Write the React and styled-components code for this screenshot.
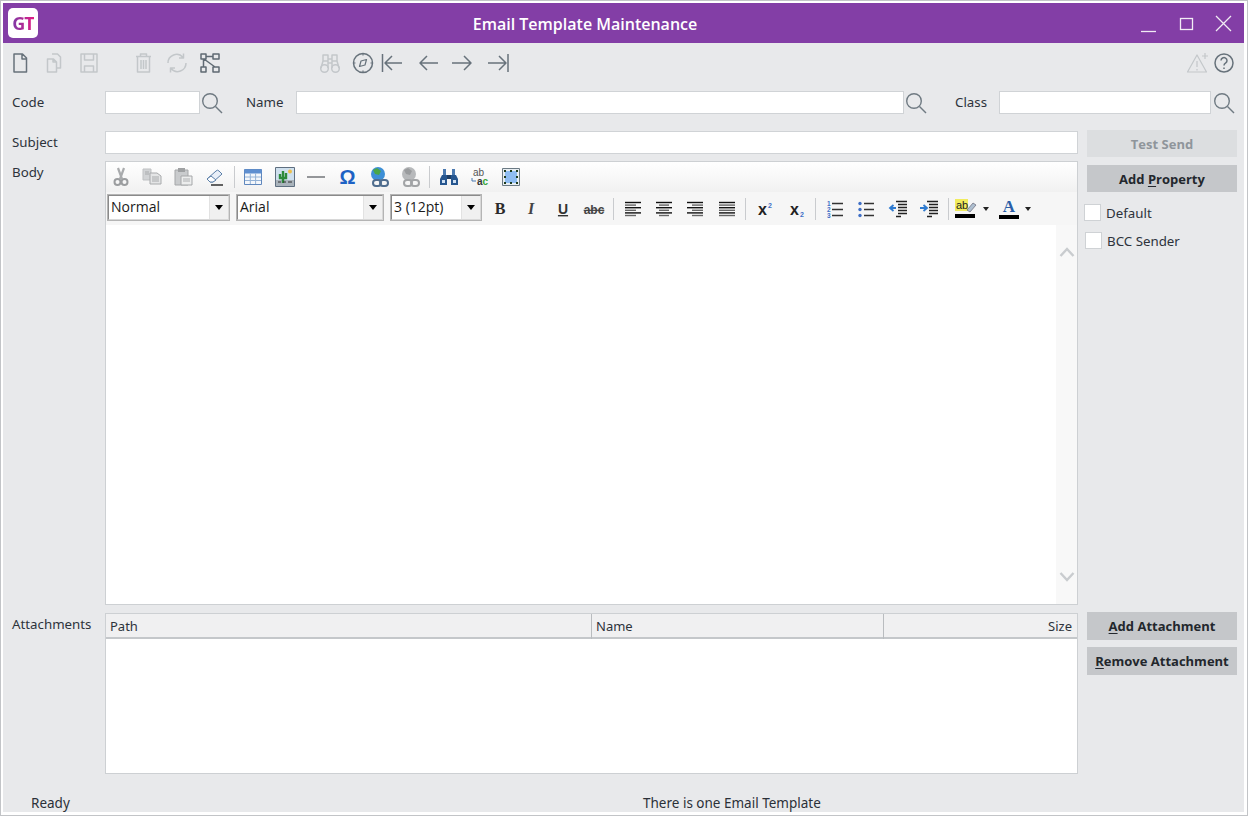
import React from "react";
import styled, { createGlobalStyle } from "styled-components";

const Global = createGlobalStyle`
  html, body { margin: 0; padding: 0; background: #fff; }
  * { box-sizing: border-box; }
  body { font-family: "Noto Sans", "Open Sans", sans-serif; font-size: 13.3px; color: #2b3038; }
`;

const Frame = styled.div`
  width: 1248px; height: 816px; border: 1px solid #c2c4c7; background: #fff; padding: 2px 3px 3px 2px;
`;
const Win = styled.div`
  height: 100%; background: #e8e9eb; display: flex; flex-direction: column; overflow: hidden;
`;
const TitleBar = styled.header`
  height: 40px; flex: none; background: #833ea6; display: flex; align-items: center; position: relative; padding-left: 5px;
`;
const Logo = styled.div`
  width: 30px; height: 30px; border-radius: 5px; background: #fff; display: flex; align-items: center; justify-content: center;
`;
const LogoText = styled.span`
  font: 700 18px "Open Sans", sans-serif; letter-spacing: -1px;
  background: linear-gradient(90deg, #7b3aa8, #e21c83); -webkit-background-clip: text; background-clip: text; color: transparent;
`;
const Title = styled.h1`
  flex: 1; margin: 0 0 0 -35px; padding: 1px 77px 0 0; text-align: center; color: #fff; font: 600 16px "Open Sans", sans-serif;
`;
const WinControls = styled.div`
  position: absolute; right: 0; top: 0; height: 40px; width: 120px;
`;
const WinSvg = styled.svg`
  position: absolute; left: 0; top: 0; width: 120px; height: 40px; fill: none; stroke: #f1ecf4; stroke-width: 1.3;
`;
const Toolbar = styled.div`
  height: 38px; flex: none; display: flex; align-items: center; padding-top: 1px;
`;
const ToolSlot = styled.span`
  width: 24px; height: 24px; flex: none; margin-left: ${p => p.$ml || 0}px; display: flex;
`;
const Spacer = styled.div` flex: 1; `;
const Ico = styled.svg`
  width: 24px; height: 24px; fill: none; stroke: ${p => p.$dark ? "#5f6a73" : p.$off ? "#c3c7ca" : "#67727b"}; stroke-width: 1.5; stroke-linejoin: round;
`;
const TopRow = styled.div`
  height: 23px; flex: none; display: flex; align-items: center; padding-left: 9px; margin-top: 10px;
`;
const Label = styled.label`
  display: block; width: ${p => p.$w ? p.$w + "px" : "auto"}; flex: none; white-space: nowrap; color: #2d333b;
  margin-left: ${p => p.$ml || 0}px; padding-bottom: ${p => p.$pb || 0}px;
`;
const Input = styled.div`
  height: 23px; width: ${p => p.$w ? p.$w + "px" : "100%"}; flex: none; background: #fff; border: 1px solid #d0d3d6;
`;
const SearchBtn = styled.svg`
  width: 24px; height: 24px; flex: none; fill: none; stroke: #6f7a82; stroke-width: 1.4; margin-left: ${p => p.$ml || 0}px;
`;
const FormGrid = styled.div`
  display: grid; grid-template-columns: 93px 973px 150px; column-gap: 0; padding-left: 9px; margin-top: 17px;
  grid-template-rows: 23px 445px 161px; row-gap: 7px;
`;
const RowLabel = styled(Label)`
  padding-top: ${p => p.$top || 0}px;
`;
const SideCol = styled.div`
  margin-left: 9px; display: flex; flex-direction: column; gap: 7px; position: relative;
`;
const SideBtn = styled.button`
  width: 150px; height: ${p => p.$h || 28}px; border: 0; padding: 0; flex: none; background: ${p => p.disabled ? "#dcdee0" : "#c5c7ca"};
  color: ${p => p.disabled ? "#8f959b" : "#23272d"}; font: 700 13px "Open Sans", "Noto Sans", sans-serif;
  margin-top: ${p => p.$mt || 0}px;
  u { text-underline-offset: 2px; }
`;
const CheckRow = styled.div`
  display: flex; align-items: center; gap: 5px; height: 17px; margin-left: ${p => p.$ml}px; margin-top: ${p => p.$mt}px;
`;
const Box = styled.span`
  width: 17px; height: 17px; background: #fff; border: 1px solid #cfd2d5; flex: none;
`;
const Editor = styled.div`
  border: 1px solid #cdd0d3; background: #fff; display: flex; flex-direction: column; height: 444px; width: 973px;
`;
const EdBar = styled.div`
  height: ${p => p.$h}px; flex: none; display: flex; align-items: center;
  background: ${p => p.$g ? "linear-gradient(#ffffff, #f1f1f1)" : "#f6f6f6"}; padding-left: ${p => p.$pl || 0}px;
`;
const EdSlot = styled.span`
  width: ${p => p.$w || 31.4}px; flex: none; height: 24px; display: flex; align-items: center; justify-content: center;
`;
const EdGap = styled.span` width: ${p => p.$w}px; flex: none; `;
const EdSep = styled.span`
  width: 7px; flex: none; display: flex; justify-content: center;
  &::before { content: ""; width: 1px; height: 22px; background: #c9cbce; }
`;
const EdIco = styled.svg` width: ${p => p.$w || 20}px; height: 20px; flex: none; overflow: visible; `;
const OmegaGlyph = styled.span`
  font: 700 20px/24px "Liberation Sans", Arial, sans-serif; color: #1d62c4;
`;
const FontColorGlyph = styled.span`
  display: block; width: 20px; height: 20px; text-align: center; overflow: visible;
  font: 700 17px/16px "Liberation Serif", serif; color: #2a5ea8; border-bottom: 4px solid #000;
`;
const Select = styled.div`
  width: ${p => p.$w}px; height: 27px; margin-left: ${p => p.$ml || 0}px; margin-top: -2px; flex: none; background: #fff; display: flex; align-items: stretch;
  border: 2px solid; border-color: #8a8a8a #d8d8d8 #d8d8d8 #8a8a8a; outline: 1px solid #b4b4b4; outline-offset: -1px;
  font: 14px "Open Sans", Arial, sans-serif; color: #1a1a1a;
`;
const SelectText = styled.span` flex: 1; padding: 1px 0 0 2px; line-height: 19px; `;
const SelectArrow = styled.span`
  width: 19px; background: #f0f0f0; border-left: 1px solid #e2e2e2; display: flex; align-items: center; justify-content: center;
  &::before { content: ""; border: 4px solid transparent; border-top: 5px solid #000; border-bottom: 0; }
`;
const Drop = styled.span`
  border: 3px solid transparent; border-top: 4px solid #222; border-bottom: 0; margin-left: ${p => p.$ml || 0}px; flex: none;
`;
const EdBody = styled.div` flex: 1; display: flex; justify-content: flex-end; background: #fff; `;
const ScrollBar = styled.div`
  width: 21px; background: #f8f8f8; display: flex; flex-direction: column; justify-content: space-between; align-items: center; padding: 21px 0;
`;
const Chev = styled.svg` width: 16px; height: 12px; fill: none; stroke: #c9cccf; stroke-width: 2.4; `;
const Table = styled.div`
  border: 1px solid #cdd0d3; background: #fff; width: 973px; height: 161px;
`;
const THead = styled.div`
  height: 25px; background: #f0f0f1; border-bottom: 2px solid #c4c7ca; display: grid; grid-template-columns: 485px 292px 1fr;
`;
const Th = styled.div`
  padding: 0 5px 0 4px; line-height: 25px; font-size: 13px; border-left: ${p => p.$first ? 0 : "1px solid #b9bcbf"}; text-align: ${p => p.$right ? "right" : "left"}; color: #2d333b;
`;
const Status = styled.footer`
  margin-top: auto; height: 22px; flex: none; position: relative; display: flex; align-items: center; padding-left: 28px; padding-top: 4px; font-size: 13.5px;
`;
const StatusMid = styled.span`
  position: absolute; left: 640px; top: 4px; white-space: nowrap;
`;
const EndGap = styled.span` width: 8px; flex: none; `;

const P = ({ off, dark, children }) => <Ico viewBox="0 0 24 24" $off={off} $dark={dark}>{children}</Ico>;
const Search = ({ ml }) => <SearchBtn viewBox="0 0 24 24" $ml={ml}><circle cx="10" cy="10" r="7.3" /><path d="M15.5 15.5 22 22" /></SearchBtn>;

const ScissorsI = () => <EdIco viewBox="0 0 20 20"><path d="M7 1l4 11M13 1 9 12" stroke="#a9abad" strokeWidth="2.2" fill="none" /><circle cx="6.500" cy="15" r="3" fill="none" stroke="#9b9d9f" strokeWidth="2" /><circle cx="13.500" cy="15" r="3" fill="none" stroke="#9b9d9f" strokeWidth="2" /></EdIco>;
const CopyI = () => <EdIco viewBox="0 0 20 20"><path d="M1 2h8v11H1z" fill="#d2d4d6" stroke="#bfc1c3" /><path d="M8 6h7l4 3v8H8z" fill="#e4e5e6" stroke="#a8aaac" /><path d="M3 5h4M3 7h4M10 10h7M10 12h7M10 14h7" stroke="#a8aaac" /></EdIco>;
const PasteI = () => <EdIco viewBox="0 0 20 20"><path d="M2 3h13v15H2z" fill="#c9cbcd" stroke="#a5a7a9" /><path d="M5 1h7v4H5z" fill="#9fa1a3" /><path d="M8 9h11v9H8z" fill="#eceded" stroke="#a5a7a9" /><path d="M10 12h7M10 14h7" stroke="#aeb0b2" /></EdIco>;
const EraserI = () => <EdIco viewBox="0 0 20 20"><path d="M2 12 11 4a2 2 0 0 1 3 0l3 3-9 8H5z" fill="#e9eff8" stroke="#5a7ea8" /><path d="M2 12l4-3 5 4-3 2H5z" fill="#fff" stroke="#5a7ea8" /><path d="M6 18h12" stroke="#222" strokeWidth="1.4" /></EdIco>;
const TableI = () => <EdIco viewBox="0 0 20 20"><path d="M1.500 2.500h17v15h-17z" fill="#f4f7fb" stroke="#5f87bd" /><path d="M1.500 2.500h17v4h-17z" fill="#5f8fd0" /><path d="M2 10h16M2 13.500h16M7.300 6.500V17M12.600 6.500V17" stroke="#94b2d6" /></EdIco>;
const ImageI = () => <EdIco viewBox="0 0 20 20"><path d="M.5.5h19v19H.5z" fill="#cfe0ee" stroke="#5f6f80" /><path d="M1 13h18v6H1z" fill="#a9b3bb" /><path d="M8 4v12M5 7v4h6V6" stroke="#2c8a3a" strokeWidth="2.400" fill="none" /><circle cx="15" cy="4.500" r="2" fill="#eec04a" /><path d="M3 15h3M8 15h3M13 15h4" stroke="#333" /></EdIco>;
const HrI = () => <EdIco viewBox="0 0 20 20"><path d="M1 10h18" stroke="#7b7e81" strokeWidth="1.600" /></EdIco>;
const LinkI = ({ gray }) => <EdIco viewBox="0 0 20 20" $w={22}><circle cx="9" cy="7" r="7" fill={gray ? "#b7b9bb" : "#3d8fd6"} /><path d="M4 3l4-2 4 3-2 4-4-1z" fill={gray ? "#9a9c9e" : "#49a648"} /><rect x="4" y="13" width="8" height="6" rx="3" fill="none" stroke={gray ? "#a2a4a6" : "#4f6d8e"} strokeWidth="2" /><rect x="11" y="13" width="8" height="6" rx="3" fill="none" stroke={gray ? "#a2a4a6" : "#4f6d8e"} strokeWidth="2" /></EdIco>;
const FindI = () => <EdIco viewBox="0 0 20 20"><path d="M3 8h5v10H1V12zM12 8h5l2 4v6h-7z" fill="#26568f" /><path d="M4 2h3v6H4zM13 2h3v6h-3z" fill="#4a79b0" /><path d="M8 8h4v4H8z" fill="#1f3f66" /><path d="M3 13h3v3H3zM14 13h3v3h-3z" fill="#cfe0f2" /></EdIco>;
const ReplaceI = () => <EdIco viewBox="0 0 20 20"><text x="3" y="9" fontFamily="Liberation Sans" fontSize="10" fill="#555">ab</text><text x="7" y="18" fontFamily="Liberation Sans" fontWeight="700" fontSize="10" fill="#333">a<tspan fill="#3aa53a">c</tspan></text><path d="M2 11v3h4" stroke="#4a79b0" fill="none" /></EdIco>;
const SelectAllI = () => <EdIco viewBox="0 0 20 20"><path d="M1.500 1.500h17v17h-17z" fill="#e8eef2" stroke="#6b7a84" /><path d="M4 4h12v12H4z" fill="#8fbdf2" /><path d="M3 3h2v2H3zM9 3h2v2H9zM15 3h2v2h-2zM3 9h2v2H3zM15 9h2v2h-2zM3 15h2v2H3zM9 15h2v2H9zM15 15h2v2h-2z" fill="#1d3b1d" /></EdIco>;

const Glyph = ({ t, bold, italic, under, strike, color = "#2a2a2a", size = 16, family = "Liberation Serif" }) => (
  <EdIco viewBox="0 0 20 20" $w={22}><text x="10" y="15" textAnchor="middle" fontFamily={family} fontSize={size} fontWeight={bold ? 700 : 400} fontStyle={italic ? "italic" : "normal"} fill={color} textDecoration={under ? "underline" : strike ? "line-through" : "none"}>{t}</text></EdIco>
);
const Lines = ({ pat }) => (
  <EdIco viewBox="0 0 20 20">{pat.map(([a, b], i) => <path key={i} d={`M${a} ${3.5 + i * 2.6}H${b}`} stroke={i % 2 ? "#666" : "#111"} strokeWidth="1.400" />)}</EdIco>
);
const ScriptI = ({ sub }) => (
  <EdIco viewBox="0 0 20 20"><text x="3" y="16" fontFamily="Liberation Sans" fontWeight="700" fontSize="16" fill="#222">x</text><text x="13" y={sub ? 18 : 9} fontFamily="Liberation Sans" fontWeight="700" fontSize="7" fill="#3f6fc6">2</text></EdIco>
);
const OlI = () => <EdIco viewBox="0 0 20 20"><text x="2" y="7" fontFamily="Liberation Sans" fontWeight="700" fontSize="6.500" fill="#3f6fc6">1</text><text x="2" y="13" fontFamily="Liberation Sans" fontWeight="700" fontSize="6.500" fill="#3f6fc6">2</text><text x="2" y="19" fontFamily="Liberation Sans" fontWeight="700" fontSize="6.500" fill="#3f6fc6">3</text><path d="M7 4.500h11M7 10.500h11M7 16.500h11" stroke="#333" strokeWidth="1.300" /></EdIco>;
const UlI = () => <EdIco viewBox="0 0 20 20"><circle cx="4" cy="4.500" r="1.700" fill="#3f6fc6" /><circle cx="4" cy="10.500" r="1.700" fill="#3f6fc6" /><circle cx="4" cy="16.500" r="1.700" fill="#3f6fc6" /><path d="M8 4.500h10M8 10.500h10M8 16.500h10" stroke="#333" strokeWidth="1.300" /></EdIco>;
const IndentI = ({ out }) => <EdIco viewBox="0 0 20 20"><path d="M8 2.500h11M10 5.500h9M10 8.500h9M10 11.500h9M10 14.500h9M8 17.500h5" stroke="#222" strokeWidth="1.300" />{out ? <path d="M8 9H3M5.500 6 2 9l3.500 3" stroke="#2f7bd0" strokeWidth="1.800" fill="none" /> : <path d="M1 9h6M4.500 6 8 9l-3.500 3" stroke="#2f7bd0" strokeWidth="1.800" fill="none" />}</EdIco>;
const HighlightI = () => <EdIco viewBox="0 0 22 20" $w={22}><path d="M0 0h13v12H0z" fill="#f1ec5e" /><text x="1" y="10" fontFamily="Liberation Sans" fontSize="11" fill="#222">ab</text><path d="M12 11l6-7 3 2-6 7z" fill="#aebfd0" stroke="#667" strokeWidth=".7" /><path d="M0 15h20v4H0z" fill="#000" /></EdIco>;

export default function App() {
  return (
    <Frame>
      <Global />
      <Win>
        <TitleBar>
          <Logo><LogoText>GT</LogoText></Logo>
          <Title>Email Template Maintenance</Title>
          <WinControls>
            <WinSvg viewBox="0 0 120 40">
              <path d="M17 28.500h15" />
              <rect x="56.500" y="15.500" width="12" height="11" />
              <path d="M92 13l15 15M107 13 92 28" />
            </WinSvg>
          </WinControls>
        </TitleBar>

        <Toolbar>
          <ToolSlot $ml={5}><P><path d="M6 3h8.500L18.500 7v14H6zM14 3v5h4.500" /></P></ToolSlot>
          <ToolSlot $ml={10}><P off><path d="M10 3h5.500l3 3v11H15M5.500 8h6l3 3v10h-9zM11 8v3h3.500" /></P></ToolSlot>
          <ToolSlot $ml={11}><P off><path d="M4 3h16v18H4zM7.500 3v6h9V3M7.500 21v-6h9v6" /></P></ToolSlot>
          <ToolSlot $ml={30}><P off><path d="M5 5.500h15M9.500 5V3h6v2M6.500 6v15h12V6M10 9v9M12.500 9v9M15 9v9" /></P></ToolSlot>
          <ToolSlot $ml={10}><P off><path d="M3 12a8.500 8.500 0 0 1 15-5.500M21 12a8.500 8.500 0 0 1-15 5.500M18.500 2.500V7H14M5.500 21.500V17H10" /></P></ToolSlot>
          <ToolSlot $ml={9}><P dark><path d="M3 3h5v5H3zM15 3h6v5h-6zM3 16h5v5H3zM15 16h6v5h-6zM8 5.500h7M6 8l11 8M5.500 8v8" /></P></ToolSlot>
          <ToolSlot $ml={96}><P off><path d="M5 4h5v6H5zM14 4h5v6h-5zM10 8h4v4h-4zM5 10l-2 7M19 10l2 7M10 10v7M14 10v7" /><circle cx="6.500" cy="17.500" r="3.800" /><circle cx="17.500" cy="17.500" r="3.800" /></P></ToolSlot>
          <ToolSlot $ml={9}><P><circle cx="12" cy="12" r="9.500" /><path d="M15.500 8.500l-1.500 5.500-5.500 1.500 1.500-5.500zM12 2.500v2M12 19.500v2M2.500 12h2M19.500 12h2" strokeWidth="1.200" /></P></ToolSlot>
          <ToolSlot $ml={5}><P><path d="M2.500 3v18M22 12H5.500M12 5l-7 7 7 7" /></P></ToolSlot>
          <ToolSlot $ml={12}><P><path d="M22 12H4M11 5l-7 7 7 7" /></P></ToolSlot>
          <ToolSlot $ml={10}><P><path d="M2 12h19M14 5l7 7-7 7" /></P></ToolSlot>
          <ToolSlot $ml={13}><P><path d="M21 3v18M1 12h18M12 5l7 7-7 7" /></P></ToolSlot>
          <Spacer />
          <ToolSlot><P off><path d="M11 4 1.500 21h19zM11 10v6M11 18v1.500M19 2v6M16 5h6" strokeWidth="1.200" /></P></ToolSlot>
          <ToolSlot $ml={2}><P><circle cx="12" cy="12" r="9" /><path d="M9 9.500a3 3 0 1 1 4.500 2.700c-1 .6-1.500 1.200-1.500 2.300M12 16.500V18" /></P></ToolSlot>
          <EndGap />
        </Toolbar>

        <TopRow>
          <Label $w={93} $pb={2}>Code</Label>
          <Input $w={95} />
          <Search ml={0} />
          <Label $w={50} $ml={22} $pb={2}>Name</Label>
          <Input $w={608} />
          <Search ml={0} />
          <Label $w={44} $ml={27} $pb={2}>Class</Label>
          <Input $w={212} />
          <Search ml={1} />
        </TopRow>

        <FormGrid>
          <RowLabel $top={2}>Subject</RowLabel>
          <Input />
          <SideCol><SideBtn disabled $mt={-1} $h={27}>Test Send</SideBtn></SideCol>

          <RowLabel $top={2}>Body</RowLabel>
          <Editor>
            <EdBar $h={30} $g>
              <EdSlot $w={30.4}><ScissorsI /></EdSlot><EdSlot><CopyI /></EdSlot><EdSlot><PasteI /></EdSlot><EdSlot><EraserI /></EdSlot>
              <EdSep />
              <EdSlot><TableI /></EdSlot><EdSlot><ImageI /></EdSlot><EdSlot><HrI /></EdSlot><EdSlot><OmegaGlyph>Ω</OmegaGlyph></EdSlot><EdSlot><LinkI /></EdSlot><EdSlot><LinkI gray /></EdSlot>
              <EdSep />
              <EdSlot><FindI /></EdSlot><EdSlot><ReplaceI /></EdSlot><EdSlot><SelectAllI /></EdSlot>
            </EdBar>
            <EdBar $h={33} $pl={1}>
              <Select $w={123}><SelectText>Normal</SelectText><SelectArrow /></Select>
              <Select $w={148} $ml={6}><SelectText>Arial</SelectText><SelectArrow /></Select>
              <Select $w={92} $ml={6}><SelectText>3 (12pt)</SelectText><SelectArrow /></Select>
              <EdGap $w={2.3} />
              <EdSlot><Glyph t="B" bold /></EdSlot>
              <EdSlot><Glyph t="I" italic bold color="#444" /></EdSlot>
              <EdSlot><Glyph t="U" under bold size={14} family="Liberation Sans" color="#333" /></EdSlot>
              <EdSlot><Glyph t="abc" strike size={12} family="Liberation Sans" color="#444" bold /></EdSlot>
              <EdSep />
              <EdSlot><Lines pat={[[2, 18], [2, 13], [2, 18], [2, 13], [2, 18], [2, 13]]} /></EdSlot>
              <EdSlot><Lines pat={[[2, 18], [5, 15], [2, 18], [5, 15], [2, 18], [5, 15]]} /></EdSlot>
              <EdSlot><Lines pat={[[2, 18], [7, 18], [2, 18], [7, 18], [2, 18], [7, 18]]} /></EdSlot>
              <EdSlot><Lines pat={[[2, 18], [2, 18], [2, 18], [2, 18], [2, 18], [2, 18]]} /></EdSlot>
              <EdSep />
              <EdSlot><ScriptI /></EdSlot><EdSlot><ScriptI sub /></EdSlot>
              <EdSep />
              <EdSlot><OlI /></EdSlot><EdSlot><UlI /></EdSlot><EdSlot><IndentI out /></EdSlot><EdSlot><IndentI /></EdSlot>
              <EdSep />
              <EdSlot $w={41}><HighlightI /><Drop $ml={6} /></EdSlot>
              <EdSlot $w={44}><FontColorGlyph>A</FontColorGlyph><Drop $ml={6} /></EdSlot>
            </EdBar>
            <EdBody>
              <ScrollBar>
                <Chev viewBox="0 0 16 12"><path d="M1.500 10 8 3l6.500 7" /></Chev>
                <Chev viewBox="0 0 16 12"><path d="M1.500 2 8 9l6.500-7" /></Chev>
              </ScrollBar>
            </EdBody>
          </Editor>
          <SideCol>
            <SideBtn $mt={4} $h={27}>Add <u>P</u>roperty</SideBtn>
            <CheckRow $ml={-3} $mt={5}><Box /><Label>Default</Label></CheckRow>
            <CheckRow $ml={-2} $mt={4}><Box /><Label>BCC Sender</Label></CheckRow>
          </SideCol>

          <RowLabel $top={2}>Attachments</RowLabel>
          <Table>
            <THead>
              <Th $first>Path</Th>
              <Th>Name</Th>
              <Th $right>Size</Th>
            </THead>
          </Table>
          <SideCol>
            <SideBtn $mt={-1}><u>A</u>dd Attachment</SideBtn>
            <SideBtn><u>R</u>emove Attachment</SideBtn>
          </SideCol>
        </FormGrid>

        <Status>
          Ready
          <StatusMid>There is one Email Template</StatusMid>
        </Status>
      </Win>
    </Frame>
  );
}
